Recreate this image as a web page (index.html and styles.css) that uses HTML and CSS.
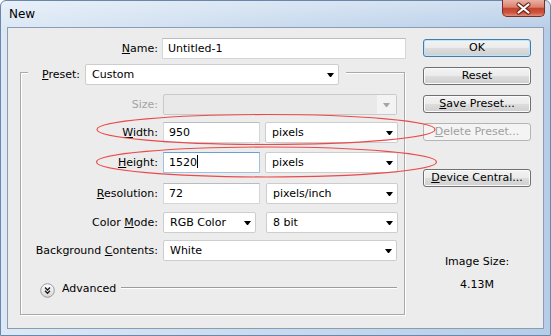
FILE: index.html
```html
<!DOCTYPE html>
<html>
<head>
  <link rel="stylesheet" href="styles.css">
</head>
<body>
  <div class="window">
    <div class="titlebar">
      <span class="title">New</span>
      <div class="close-btn">
        <svg width="43" height="17" viewBox="0 0 43 17">
          <path d="M16.5 4.5 L26.5 12.5 M26.5 4.5 L16.5 12.5" stroke="#6b2418" stroke-width="4.2" stroke-linecap="round"/>
          <path d="M16.5 4.5 L26.5 12.5 M26.5 4.5 L16.5 12.5" stroke="#fff" stroke-width="2.2" stroke-linecap="round"/>
        </svg>
      </div>
    </div>

    <div class="client">
      <div class="form-panel">
        <div class="row name-row">
          <span class="lbl"><u>N</u>ame:</span>
          <div class="input name-input">Untitled-1</div>
        </div>

        <div class="group">
          <div class="legend">
            <span class="legend-lbl"><u>P</u>reset:</span>
            <div class="select preset-select">Custom<span class="arrow"></span></div>
          </div>

          <div class="row size-row">
            <span class="lbl disabled">Size:</span>
            <div class="select size-select"><span class="drop-part"><span class="arrow"></span></span></div>
          </div>
          <div class="row tight">
            <span class="lbl"><u>W</u>idth:</span>
            <div class="input num-input">950</div>
            <div class="select unit-select">pixels<span class="arrow"></span></div>
          </div>
          <div class="row loose">
            <span class="lbl"><u>H</u>eight:</span>
            <div class="input num-input focused">1520<span class="caret"></span></div>
            <div class="select unit-select">pixels<span class="arrow"></span></div>
          </div>
          <div class="row wide">
            <span class="lbl"><u>R</u>esolution:</span>
            <div class="input num-input">72</div>
            <div class="select res-select">pixels/inch<span class="arrow"></span></div>
          </div>
          <div class="row">
            <span class="lbl">Color <u>M</u>ode:</span>
            <div class="select mode-select">RGB Color<span class="arrow"></span></div>
            <div class="select depth-select">8 bit<span class="arrow"></span></div>
          </div>
          <div class="row tight">
            <span class="lbl">Background <u>C</u>ontents:</span>
            <div class="select bg-select">White<span class="arrow"></span></div>
          </div>

          <div class="advanced">
            <svg class="adv-icon" width="15" height="15" viewBox="0 0 15 15">
              <defs>
                <linearGradient id="advFill" x1="0" y1="0" x2="0" y2="1">
                  <stop offset="0" stop-color="#ffffff"/>
                  <stop offset="1" stop-color="#d6d6d6"/>
                </linearGradient>
              </defs>
              <circle cx="7.5" cy="7.5" r="6.8" fill="url(#advFill)" stroke="#9a9a9a"/>
              <path d="M5 4.5 L7.5 7 L10 4.5 M5 7.8 L7.5 10.3 L10 7.8" fill="none" stroke="#1a1a1a" stroke-width="1.3"/>
            </svg>
            <span class="adv-text">Advanced</span>
            <span class="adv-line"></span>
          </div>
        </div>
      </div>

      <div class="button-panel">
        <div class="btn default-btn">OK</div>
        <div class="btn">Reset</div>
        <div class="btn"><u>S</u>ave Preset...</div>
        <div class="btn disabled-btn"><u>D</u>elete Preset...</div>
        <div class="btn device-btn"><u>D</u>evice Central...</div>
        <div class="image-size">
          <div>Image Size:</div>
          <div class="image-size-value">4.13M</div>
        </div>
      </div>
    </div>

    <!-- red markup drawn over the dialog -->
    <svg class="annotations" width="551" height="336" viewBox="0 0 551 336">
      <ellipse cx="266" cy="129.5" rx="169" ry="15" fill="none" stroke="#ec4a4a" stroke-width="1.2"/>
      <ellipse cx="266.5" cy="162" rx="170" ry="15" fill="none" stroke="#ec4a4a" stroke-width="1.2"/>
    </svg>
  </div>
</body>
</html>
```

FILE: styles.css
```css
body {
  margin: 0;
  font-family: "DejaVu Sans", sans-serif;
  font-size: 11px;
  color: #000;
}
.window {
  position: relative;
  width: 551px;
  height: 336px;
  box-sizing: border-box;
  border: 1px solid #6a86a8;
  border-radius: 6px 6px 0 0;
  background: linear-gradient(180deg, rgba(255,255,255,.35), rgba(255,255,255,0) 30px),
    linear-gradient(90deg, #dce8f5 0%, #c8daee 50%, #b6cde8 100%);
  display: flex;
  flex-direction: column;
}
.titlebar {
  height: 26px;
  display: flex;
  justify-content: space-between;
  padding-left: 8px;
}
.title {
  font-size: 12px;
  line-height: 14px;
  padding-top: 6px;
}
.close-btn {
  width: 43px;
  height: 17px;
  margin: -1px 5px 0 0;
  box-sizing: border-box;
  border: 1px solid #7a2e22;
  border-top: none;
  border-radius: 0 0 5px 5px;
  background: linear-gradient(180deg, #eab1a4 0%, #d9806c 45%, #c4432e 52%, #cf5440 80%, #e0907a 100%);
}
.close-btn svg {
  display: block;
  margin-left: -1px;
}
.client {
  flex: 1;
  margin: 0 6px 6px 6px;
  background: #ececec;
  border: 1px solid #8b9db5;
  display: flex;
}
/* Left side form */
.form-panel {
  width: 406px;
}
.row {
  display: flex;
  align-items: center;
  gap: 5px;
  height: 21px;
  margin-top: 8px;
}
.row.tight {
  margin-top: 7px;
}
.row.loose {
  margin-top: 9px;
}
.row.wide {
  margin-top: 10px;
}
.lbl {
  flex-shrink: 0;
  width: 137px;
  text-align: right;
  white-space: nowrap;
}
.lbl.disabled {
  color: #a3a3a3;
}
.name-row {
  margin-top: 10px;
  gap: 4px;
}
.name-row .lbl {
  width: 150px;
}
.input {
  height: 21px;
  box-sizing: border-box;
  border: 1px solid #d3d6db;
  border-top-color: #b9bcc1;
  background: #fff;
  padding: 0 5px;
  line-height: 19px;
  white-space: nowrap;
}
.input.focused {
  border-color: #9cc3e6;
  border-top-color: #6b9fd0;
}
.caret {
  display: inline-block;
  width: 1px;
  height: 13px;
  background: #000;
  vertical-align: -2px;
}
.name-input {
  width: 244px;
}
.num-input {
  width: 97px;
}
.select {
  flex-shrink: 0;
  height: 21px;
  box-sizing: border-box;
  border: 1px solid #cdcdcd;
  border-radius: 2px;
  background: #fff;
  display: flex;
  align-items: center;
  justify-content: space-between;
  padding: 0 4px 0 6px;
  white-space: nowrap;
}
.arrow {
  width: 1px;
  height: 0;
  border-left: 3px solid transparent;
  border-right: 3px solid transparent;
  border-top: 4px solid #000;
}
.preset-select {
  width: 254px;
}
.size-select {
  width: 234px;
  padding: 0;
  justify-content: flex-end;
  background: #e9e9e9;
  border-color: #c9c9c9;
}
.size-select .drop-part {
  width: 19px;
  height: 100%;
  background: #f3f3f3;
  display: flex;
  align-items: center;
  justify-content: center;
}
.size-select .arrow {
  border-top-color: #a5a5a5;
}
.unit-select {
  width: 133px;
}
.res-select {
  width: 132px;
  margin-left: 1px;
}
.mode-select {
  width: 93px;
}
.depth-select {
  width: 132px;
  margin-left: 5px;
}
.bg-select {
  width: 234px;
}
/* Preset group box */
.group {
  margin: 13px 0 0 12px;
  width: 385px;
  box-sizing: border-box;
  border: 1px solid #a9a9a9;
  box-shadow: inset 1px 1px 0 #fff, 1px 1px 0 #fff;
  padding-bottom: 16px;
  display: flex;
  flex-direction: column;
}
.legend {
  align-self: flex-start;
  display: flex;
  align-items: center;
  gap: 4px;
  margin: -9px 0 0 7px;
  padding: 0 7px 0 14px;
  background: #ececec;
}
.legend-lbl {
  width: 39px;
  white-space: nowrap;
}
.size-row {
  margin-top: 9px;
}
.advanced {
  display: flex;
  align-items: center;
  height: 15px;
  margin: 22px 0 0 19px;
}
.adv-icon {
  flex-shrink: 0;
}
.adv-text {
  margin: 0 0 5px 7px;
  line-height: 13px;
}
.adv-line {
  flex: 1;
  height: 1px;
  background: #9c9c9c;
  margin: 0 7px 6px 5px;
  box-shadow: 0 1px 0 #fff;
}
/* Right side buttons */
.button-panel {
  width: 108px;
  margin-left: 9px;
  padding-top: 11px;
  display: flex;
  flex-direction: column;
}
.btn {
  height: 18px;
  box-sizing: border-box;
  border: 1px solid #707070;
  border-radius: 3px;
  background: linear-gradient(180deg, #f3f3f3 0%, #ebebeb 50%, #dddddd 51%, #cfcfcf 100%);
  box-shadow: inset 0 0 0 1px #fbfbfb;
  text-align: center;
  line-height: 16px;
  margin-bottom: 10px;
  white-space: nowrap;
}
.default-btn {
  border-color: #3c7fb1;
  box-shadow: inset 0 0 0 1px #bfe3f7;
}
.disabled-btn {
  border-color: #b5b5b5;
  background: #f4f4f4;
  box-shadow: none;
  color: #a0a0a0;
}
.device-btn {
  margin-top: 18px;
}
.image-size {
  margin-top: 58px;
  text-align: center;
  line-height: 14px;
}
.image-size-value {
  margin-top: 9px;
}
.annotations {
  position: absolute;
  left: -1px;
  top: -1px;
  pointer-events: none;
}
```
